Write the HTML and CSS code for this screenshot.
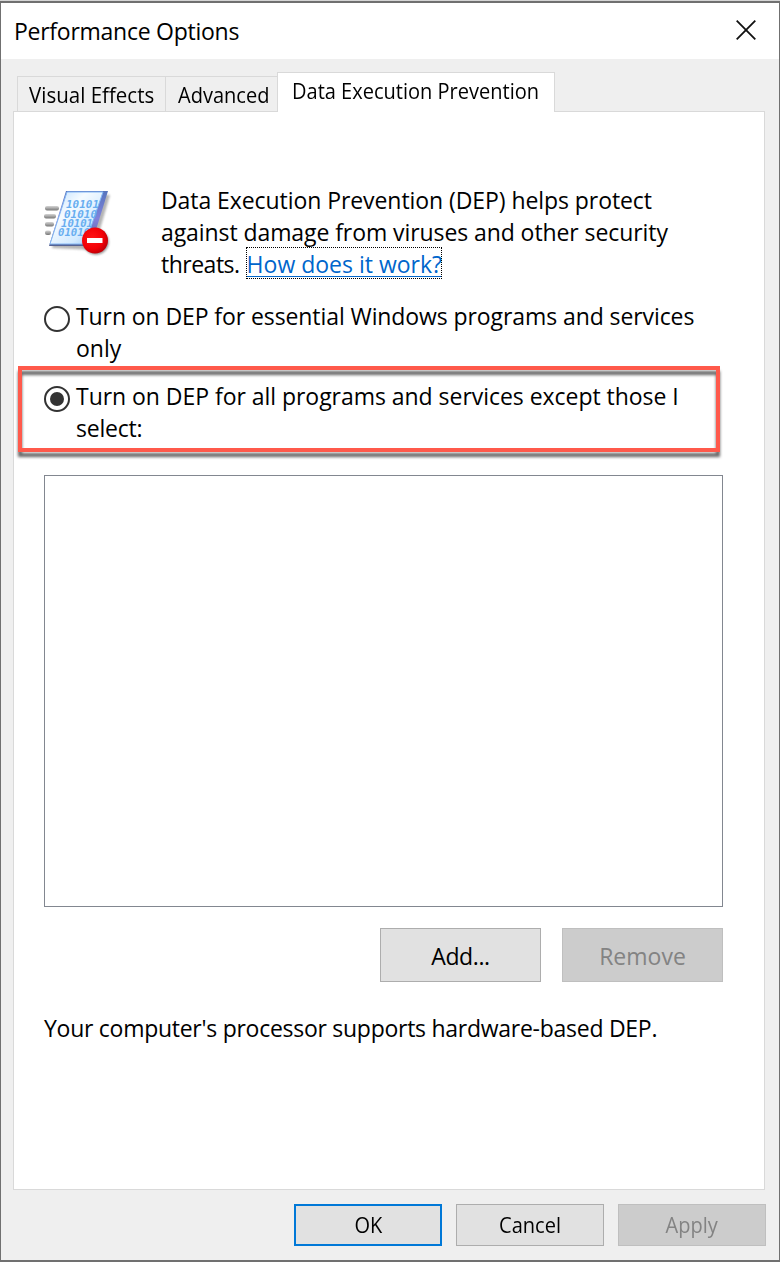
FILE: index.html
```html
<!DOCTYPE html>
<html lang="en">
<head>
<meta charset="utf-8">
<title>Performance Options</title>
<link rel="stylesheet" href="styles.css">
</head>
<body>
<div class="window">
  <header class="titlebar">
    <span class="title">Performance Options</span>
    <svg class="close" width="20" height="20" viewBox="0 0 20 20"><path d="M.7.7 19.3 19.3M19.3.7.7 19.3" stroke="#111" stroke-width="1.8"/></svg>
  </header>
  <nav class="tabs">
    <div class="tab tab-visual"><span class="t-visual">Visual Effects</span></div>
    <div class="tab tab-advanced"><span class="t-advanced">Advanced</span></div>
    <div class="tab tab-active"><span class="t-dep">Data Execution Prevention</span></div>
  </nav>
  <main class="panel">
    <section class="intro">
      <svg class="dep-icon" width="68" height="68" viewBox="0 0 68 68">
        <defs>
          <linearGradient id="page" x1="0" y1="0" x2="1" y2="1"><stop offset="0" stop-color="#b9dcff"/><stop offset=".35" stop-color="#f5fbff"/><stop offset=".7" stop-color="#d2eaff"/><stop offset="1" stop-color="#83b9f2"/></linearGradient>
          <linearGradient id="edge" x1="0" y1="0" x2="0" y2="1"><stop offset="0" stop-color="#5675bd"/><stop offset=".5" stop-color="#8182dc"/><stop offset="1" stop-color="#536293"/></linearGradient>
          <linearGradient id="bar" x1="0" y1="0" x2="0" y2="1"><stop offset="0" stop-color="#d5d5d5"/><stop offset="1" stop-color="#777"/></linearGradient>
          <radialGradient id="stop" cx=".4" cy=".4" r=".65"><stop offset="0" stop-color="#ff1515"/><stop offset=".65" stop-color="#f20006"/><stop offset="1" stop-color="#b90008"/></radialGradient>
          <filter id="soft" x="-20%" y="-20%" width="140%" height="150%"><feGaussianBlur stdDeviation="1"/></filter>
        </defs>
        <path d="M8 58 24 5H66L50 60Z" fill="#777" opacity=".55" filter="url(#soft)"/>
        <g fill="url(#bar)"><rect x="1" y="16" width="14" height="4.5" rx="2"/><rect x="0" y="24" width="12" height="4.5" rx="2"/><rect x="1" y="32" width="9" height="4.5" rx="2"/><rect x="1" y="40.500" width="6" height="4.5" rx="2"/></g>
        <path d="M22 1H64L47 56H5Z" fill="url(#edge)"/>
        <path d="M23 2H59L41 54H6Z" fill="url(#page)" stroke="#84b7f4"/>
        <g class="bits"><text x="22" y="18" textLength="33" lengthAdjust="spacingAndGlyphs">10101</text><text x="20" y="27.5" textLength="33" lengthAdjust="spacingAndGlyphs">01010</text><text x="17" y="36.5" textLength="32" lengthAdjust="spacingAndGlyphs">10101</text><text x="14" y="46" textLength="32" lengthAdjust="spacingAndGlyphs">01010</text></g>
        <circle cx="52" cy="52" r="12.8" fill="#555" opacity=".6" filter="url(#soft)"/>
        <circle cx="51" cy="50.500" r="13" fill="url(#stop)"/>
        <rect x="43" y="48" width="15.5" height="5" fill="#fff"/>
      </svg>
      <div class="lines">
        <p class="i1">Data Execution Prevention (DEP) helps protect</p>
        <p class="i2">against damage from viruses and other security</p>
        <p class="last"><span class="i3">threats.</span><a class="link">How does it work?</a></p>
      </div>
    </section>
    <div class="option first">
      <i class="radio"></i>
      <div class="lines"><p class="r1">Turn on DEP for essential Windows programs and services</p><p class="r2">only</p></div>
    </div>
    <div class="option selected">
      <i class="radio checked"></i>
      <div class="lines"><p class="r3">Turn on DEP for all programs and services except those I</p><p class="r4">select:</p></div>
    </div>
    <div class="list"></div>
    <div class="actions">
      <div class="button large"><span class="b-add">Add...</span></div>
      <div class="button large disabled"><span class="b-remove">Remove</span></div>
    </div>
    <p class="support">Your computer's processor supports hardware-based DEP.</p>
  </main>
  <footer class="footer">
    <div class="button primary"><span class="narrow">OK</span></div>
    <div class="button"><span class="narrow">Cancel</span></div>
    <div class="button disabled"><span class="narrow">Apply</span></div>
  </footer>
</div>
</body>
</html>
```
FILE: styles.css
```css
* { box-sizing: border-box; }
body { margin: 0; background: #d5d5d5; font-family: "Open Sans", "Noto Sans", sans-serif; font-size: 23px; line-height: 32px; color: #000; }
p { margin: 0; }
span, p, a { white-space: nowrap; }
.window { width: 780px; height: 1261px; margin-top: 1px; background: #efefef; border: solid #707070; border-width: 2px 1px; display: flex; flex-direction: column; }
.titlebar { height: 56px; flex: none; background: #fff; display: flex; justify-content: space-between; align-items: flex-start; padding: 12px 23px 0 13px; }
.title { letter-spacing: -.26px; }
.close { margin-top: 5px; }
.tabs { height: 52px; flex: none; display: flex; align-items: flex-end; padding-left: 16px; }
.tab { flex: none; height: 35px; border: 1px solid #d9d9d9; border-bottom: 0; padding-top: 1px; display: flex; font-size: 22px; }
.tab span { transform: scaleX(.91); transform-origin: left; }
.tab .t-visual { transform: scaleX(.932); }
.tab-visual { width: 148px; padding-left: 11px; border-right: 0; }
.tab-advanced { width: 112px; padding-left: 12px; border-right: 0; }
.tab-active { width: 278px; height: 40px; background: #fff; padding: 1px 0 0 14px; position: relative; z-index: 1; margin-bottom: -1px; }
.panel { width: 752px; height: 1079px; margin-left: 12px; flex: none; background: #fff; border: 1px solid #d9d9d9; padding: 72px 41px 0 30px; }
.intro { display: flex; height: 116px; }
.dep-icon { flex: none; margin: 6px 49px 0 0; }
.bits { fill: #67adf0; font: italic bold 10px "DejaVu Sans Mono", monospace; }
.i1 { letter-spacing: -.07px; }
.i2 { letter-spacing: -.08px; }
.i3 { letter-spacing: -.5px; }
.r1 { letter-spacing: -.09px; }
.r3 { letter-spacing: -.04px; }
.r4 { letter-spacing: -.2px; }
.b-add { letter-spacing: -.4px; }
.last { display: flex; gap: 7px; }
.link { color: #0066cc; text-decoration: underline; text-decoration-thickness: 1px; text-underline-offset: 3px; outline: 1px dotted #000; height: 30px; width: 194px; }
.option { display: flex; gap: 6px; }
.first { height: 80px; }
.radio { flex: none; width: 26px; height: 26px; margin-top: 6px; border: 2px solid #333; border-radius: 50%; display: grid; place-items: center; }
.checked::after { content: ""; width: 14px; height: 14px; border-radius: 50%; background: #333; }
.selected { position: relative; height: 86px; width: 702px; margin: -14px 0 0 -26px; padding: 14px 0 0 26px; }
.selected::before { content: ""; position: absolute; inset: 0; border: 4px solid #ff594b; filter: drop-shadow(0 5px 1.5px rgba(0,0,0,.6)); }
.list { height: 432px; width: 679px; margin-top: 23px; border: 1px solid #828790; }
.actions { display: flex; justify-content: flex-end; gap: 21px; margin-top: 21px; }
.button { width: 148px; height: 42px; border: 1px solid #adadad; background: #e1e1e1; display: flex; align-items: center; justify-content: center; font-size: 22px; padding-bottom: 2px; }
.narrow { transform: scaleX(.91); }
.large { width: 161px; height: 54px; font-size: 23px; padding: 2px 0 0; }
.disabled { color: #838383; background: #ccc; border-color: #bfbfbf; }
.primary { border: 2px solid #0078d7; }
.support { margin-top: 30px; letter-spacing: -.27px; }
.footer { display: flex; justify-content: flex-end; gap: 14px; padding: 14px 13px 0 0; }
```
